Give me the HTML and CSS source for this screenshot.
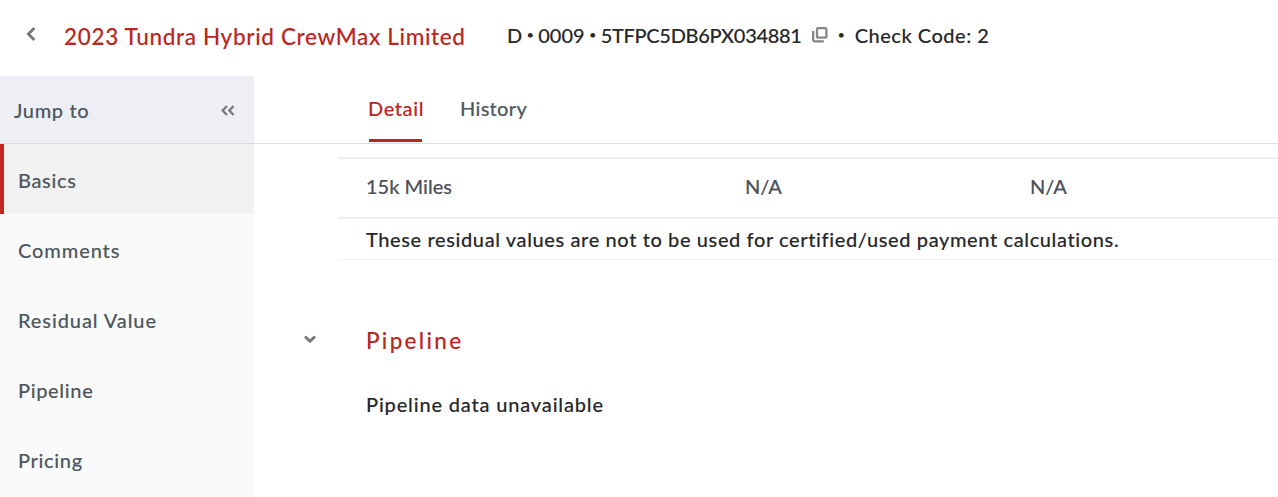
FILE: index.html
```html
<!DOCTYPE html>
<html lang="en">
<head>
  <meta charset="UTF-8" />
  <meta name="viewport" content="width=device-width, initial-scale=1.0"/>
  <title>2023 Tundra Hybrid CrewMax Limited</title>
  <link rel="stylesheet" href="styles.css">
</head>
<body>

  <header class="vehicle-header">
    <svg class="back" width="10" height="14" viewBox="0 0 10 14"><path d="M8.4 1 2.4 7 8.4 13"/></svg>
    <h1 class="vehicle-title">2023 Tundra Hybrid CrewMax Limited</h1>
    <div class="vehicle-info">
      <span>D</span>
      <span class="dot">•</span>
      <span>0009</span>
      <span class="dot">•</span>
      <span class="vin">5TFPC5DB6PX034881</span>
      <svg class="copy" width="16" height="16" viewBox="0 0 16 16"><rect x="5" y="1.2" width="9.4" height="9.4" rx="1.2"/><path d="M1.2 4v9q0 1.3 1.3 1.3h9.3"/></svg>
      <span class="dot wide">•</span>
      <span class="check-code">Check Code: 2</span>
    </div>
  </header>

  <div class="layout">
    <aside class="sidebar">
      <div class="jump-to">
        <span>Jump to</span>
        <svg class="collapse" width="14" height="11" viewBox="0 0 14 11"><path d="M6 1 1.7 5.5 6 10M12.6 1 8.3 5.5 12.6 10"/></svg>
      </div>
      <nav>
        <a class="nav-item active">Basics</a>
        <a class="nav-item loose">Comments</a>
        <a class="nav-item loose">Residual Value</a>
        <a class="nav-item">Pipeline</a>
        <a class="nav-item">Pricing</a>
      </nav>
    </aside>

    <main>
      <div class="tabs">
        <a class="tab active">Detail</a>
        <a class="tab">History</a>
      </div>

      <div class="residual-table">
        <div class="row">
          <span>15k Miles</span>
          <span>N/A</span>
          <span>N/A</span>
        </div>
        <p class="note">These residual values are not to be used for certified/used payment calculations.</p>
      </div>

      <section class="pipeline">
        <svg class="chevron" width="12" height="8" viewBox="0 0 12 8"><path d="M1 1.5 6 6.3 11 1.5"/></svg>
        <div>
          <h2>Pipeline</h2>
          <p class="unavailable">Pipeline data unavailable</p>
        </div>
      </section>
    </main>
  </div>

</body>
</html>
```
FILE: styles.css
```css
* {
  box-sizing: border-box;
}

body {
  font-family: Lato, 'Open Sans', sans-serif;
  font-size: 20px;
  font-weight: 500;
  line-height: 24px;
  -webkit-text-stroke: 0.1px;
  background: #fff;
  color: #262729;
  margin: 0;
  height: 497px;
  overflow: hidden;
}

h1, h2, p {
  margin: 0;
  font-weight: 500;
}

svg {
  fill: none;
  stroke: #76787c;
  stroke-width: 2.8;
  flex: none;
}

span, a, h1 {
  white-space: nowrap;
}

.vehicle-header {
  display: flex;
  align-items: center;
  height: 76px;
  padding: 0 0 8px 26px;
}

.vehicle-title {
  width: 443px;
  padding: 6px 0 0 28px;
  font-size: 22.5px;
  line-height: 28px;
  letter-spacing: 0.66px;
  color: #b9271f;
}

.vehicle-info {
  display: flex;
  align-items: center;
  padding: 2px 0 0 28px;
}

.vin {
  width: 211px;
  letter-spacing: -0.3px;
}

.copy {
  stroke: #85868a;
  stroke-width: 2.3;
}

.dot {
  width: 16px;
  font-size: 12px;
  text-align: center;
}

.dot.wide {
  width: 27px;
}

.check-code {
  letter-spacing: 0.52px;
}

.layout {
  display: flex;
  height: 421px;
}

.sidebar {
  width: 254px;
  background: #fafafa;
  color: #4d575d;
  letter-spacing: 0.65px;
}

.jump-to {
  display: flex;
  align-items: center;
  justify-content: space-between;
  height: 68px;
  padding: 1px 19px 0 14px;
  background: #edeff4;
  border-bottom: 1px solid #d9dbe0;
}

.collapse {
  stroke-width: 2.3;
}

.nav-item {
  display: flex;
  align-items: center;
  height: 70px;
  padding: 1px 0 0 14px;
  border-left: 4px solid transparent;
}

.nav-item.active {
  background: #f1f1f1;
  border-left-color: #c5281f;
}

.nav-item.loose {
  letter-spacing: 0.9px;
}

main {
  flex: 1;
}

.tabs {
  display: flex;
  gap: 37px;
  height: 68px;
  padding: 20px 0 0 114px;
  border-bottom: 1px solid #dedfe1;
  color: #4d575d;
  letter-spacing: 0.3px;
}

.tab {
  height: 46px;
}

.tab.active {
  width: 55px;
  color: #b9271f;
  letter-spacing: 0.6px;
  background: linear-gradient(#b9271f, #b9271f) 1px 100% / 53px 3px no-repeat;
}

.residual-table {
  margin: 13px 0 0 84px;
  border-top: 2px solid #eeeff0;
  border-bottom: 1px solid #f3f3f3;
}

.row {
  display: grid;
  grid-template-columns: 379px 285px 1fr;
  align-items: center;
  height: 60px;
  padding: 0 0 4px 28px;
  border-bottom: 2px solid #eeeff0;
  color: #4d5058;
}

.note {
  height: 40px;
  padding: 8px 0 0 28px;
  letter-spacing: 0.61px;
}

.pipeline {
  display: flex;
  gap: 50px;
  padding: 67px 0 0 50px;
}

.chevron {
  margin-top: 8px;
}

.pipeline h2 {
  font-size: 22.5px;
  line-height: 28px;
  letter-spacing: 2.3px;
  color: #b9271f;
}

.unavailable {
  margin-top: 37px;
  letter-spacing: 0.83px;
}
```
